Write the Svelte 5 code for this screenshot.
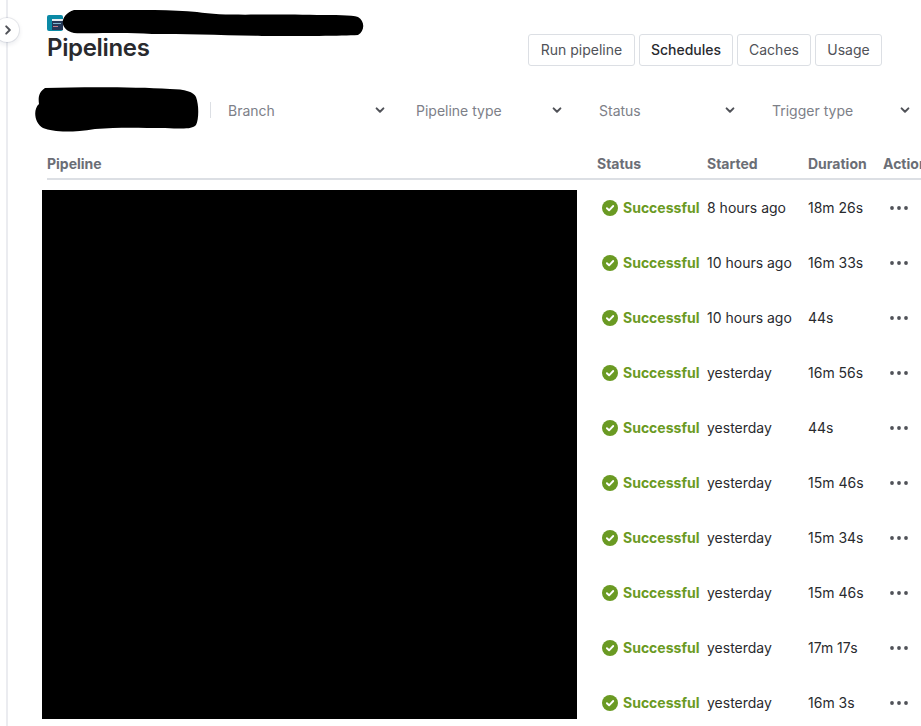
<script>
  const filters = ['Branch', 'Pipeline type', 'Status', 'Trigger type'];
  const buttons = ['Run pipeline', 'Schedules', 'Caches', 'Usage'];
  const rows = [
    { started: '8 hours ago', duration: '18m 26s' },
    { started: '10 hours ago', duration: '16m 33s' },
    { started: '10 hours ago', duration: '44s' },
    { started: 'yesterday', duration: '16m 56s' },
    { started: 'yesterday', duration: '44s' },
    { started: 'yesterday', duration: '15m 46s' },
    { started: 'yesterday', duration: '15m 34s' },
    { started: 'yesterday', duration: '15m 46s' },
    { started: 'yesterday', duration: '17m 17s' },
    { started: 'yesterday', duration: '16m 3s' }
  ];
</script>

<div class="page">
  <aside class="rail">
    <button class="collapse" aria-label="Expand sidebar">
      <svg width="12" height="12" viewBox="0 0 12 12"><path d="M4.2 2.4 7.8 6 4.2 9.6" fill="none" stroke="#505258" stroke-width="2" stroke-linecap="round" stroke-linejoin="round" /></svg>
    </button>
  </aside>

  <main class="content">
    <header class="top">
      <div class="heading">
        <div class="crumbs">
          <svg class="repo-icon" width="16" height="16" viewBox="0 0 16 16">
            <rect width="16" height="16" rx="2" fill="#0b8aa6" />
            <rect x="5" y="4" width="11" height="2" fill="#e8edf2" />
            <rect x="5" y="6" width="11" height="9" fill="#253858" />
            <rect x="6" y="8" width="8" height="1" fill="#7fb6d0" />
            <rect x="6" y="11" width="5" height="1" fill="#c97f8a" />
          </svg>
          <svg class="scribble-crumb" width="302" height="26" viewBox="0 0 302 26">
            <path d="M12 0C60 0 105 -1 135 2 165 7 215 3 255 5 272 5 290 5 296 7 303 11 303 21 296 25 280 26 240 26 200 26 160 25 120 24 90 24 60 22 30 24 12 23 -3 20 -3 5 12 0Z" fill="#000" />
          </svg>
        </div>
        <h1>Pipelines</h1>
      </div>
      <div class="actions">
        {#each buttons as label}
          <button class="btn" class:strong={label === 'Schedules'}>{label}</button>
        {/each}
      </div>
    </header>

    <div class="filter-bar">
      <svg class="scribble-search" width="165" height="46" viewBox="0 0 165 46">
        <path d="M10 1C50 0 100 0 135 2 150 2 159 5 161 10 164 18 164 32 161 38 157 42 150 42 130 41 105 41 85 40 60 42 35 46 18 45 8 41 -1 36 -2 22 4 17 3 10 4 5 10 1Z" fill="#000" />
      </svg>
      <span class="divider"></span>
      <div class="filters">
        {#each filters as name}
          <div class="filter">
            <span>{name}</span>
            <svg width="12" height="12" viewBox="0 0 12 12"><path d="M2.6 4.4 6 7.8 9.4 4.4" fill="none" stroke="#505258" stroke-width="2" stroke-linecap="round" stroke-linejoin="round" /></svg>
          </div>
        {/each}
      </div>
    </div>

    <div class="table">
      <div class="head">
        <span>Pipeline</span>
        <span>Status</span>
        <span>Started</span>
        <span>Duration</span>
        <span>Actions</span>
      </div>
      <div class="body">
        <div class="redacted"></div>
        {#each rows as row}
          <div class="status">
            <svg width="16" height="16" viewBox="0 0 16 16">
              <circle cx="8" cy="8" r="8" fill="#6a9a23" />
              <path d="M4.9 8.2 7.1 10.3 11.2 6" fill="none" stroke="#fff" stroke-width="1.9" stroke-linecap="round" stroke-linejoin="round" />
            </svg>
            <span>Successful</span>
          </div>
          <div class="cell">{row.started}</div>
          <div class="cell">{row.duration}</div>
          <div class="more">
            <svg width="20" height="6" viewBox="0 0 20 6" aria-label="More actions">
              <circle cx="3" cy="3" r="1.9" fill="#505258" />
              <circle cx="10" cy="3" r="1.9" fill="#505258" />
              <circle cx="17" cy="3" r="1.9" fill="#505258" />
            </svg>
          </div>
        {/each}
      </div>
    </div>
  </main>
</div>

<style>
  :global(html), :global(body) {
    margin: 0;
    height: 726px;
    overflow: hidden;
    background: #fff;
  }

  .page {
    display: flex;
    width: 921px;
    height: 726px;
    overflow: hidden;
    font-family: Inter, "Liberation Sans", sans-serif;
    font-size: 14px;
    color: #292a2e;
  }

  .rail {
    position: relative;
    flex: 0 0 8px;
    box-sizing: border-box;
    border-right: 2px solid #ebecf0;
  }

  .collapse {
    position: absolute;
    top: 18px;
    left: -5px;
    width: 24px;
    height: 24px;
    padding: 0 0 0 1px;
    display: flex;
    align-items: center;
    justify-content: center;
    background: #fff;
    border: 0;
    border-radius: 50%;
    box-shadow: 0 0 0 1px rgba(9, 30, 66, 0.08), 0 2px 4px 1px rgba(9, 30, 66, 0.08);
  }

  .content {
    flex: 1;
    min-width: 0;
    padding-left: 39px;
  }

  .top {
    display: flex;
    justify-content: space-between;
    height: 83px;
    padding-right: 39px;
  }

  .heading {
    padding-top: 10px;
  }

  .crumbs {
    display: flex;
    align-items: flex-start;
    height: 24px;
  }

  .repo-icon {
    margin-top: 5px;
    margin-right: -1px;
  }

  h1 {
    margin: 0;
    font-size: 24px;
    line-height: 28px;
    font-weight: 600;
    letter-spacing: -0.33px;
    color: #292a2e;
  }

  .actions {
    display: grid;
    grid-template-columns: 107px 94px 74px 67px;
    grid-template-rows: 32px;
    gap: 4px;
    padding-top: 34px;
  }

  .btn {
    padding: 0 0 1px;
    background: #fff;
    border: 1px solid #dcdfe4;
    border-radius: 3px;
    font: inherit;
    color: #505258;
  }

  .btn.strong {
    color: #292a2e;
    font-weight: 500;
  }

  .filter-bar {
    display: flex;
    align-items: center;
    height: 54px;
    margin-left: -12px;
  }

  .scribble-search {
    flex: none;
  }

  .divider {
    flex: none;
    width: 1px;
    height: 16px;
    margin: 0 17px 0 10px;
    background: #dcdfe4;
  }

  .filters {
    display: grid;
    grid-template-columns: 188px 183px 173px 139px;
  }

  .filter {
    display: flex;
    align-items: center;
    justify-content: space-between;
    color: #7d8088;
  }

  .filter:nth-child(1) {
    padding-right: 30px;
  }

  .filter:nth-child(2) {
    padding-right: 36px;
  }

  .filter:nth-child(3) {
    padding-right: 36px;
  }

  .head {
    display: grid;
    grid-template-columns: 550px 110px 101px 75px 60px;
    height: 43px;
    box-sizing: border-box;
    padding-top: 12px;
    align-items: center;
    border-bottom: 2px solid #dcdfe4;
    font-weight: 700;
    color: #6b6e76;
    white-space: nowrap;
  }

  .body {
    display: grid;
    grid-template-columns: 550px 110px 101px 75px 60px;
    grid-auto-rows: 55px;
    align-items: center;
  }

  .redacted {
    grid-column: 1;
    grid-row: 1 / span 10;
    align-self: start;
    width: 535px;
    height: 529px;
    margin: 10px 0 0 -5px;
    background: #000;
  }

  .status {
    grid-column: 2;
    display: flex;
    align-items: center;
    gap: 5px;
    padding-left: 5px;
    font-weight: 650;
    color: #6a9a23;
  }

  .more {
    display: flex;
    padding-left: 6px;
  }
</style>
